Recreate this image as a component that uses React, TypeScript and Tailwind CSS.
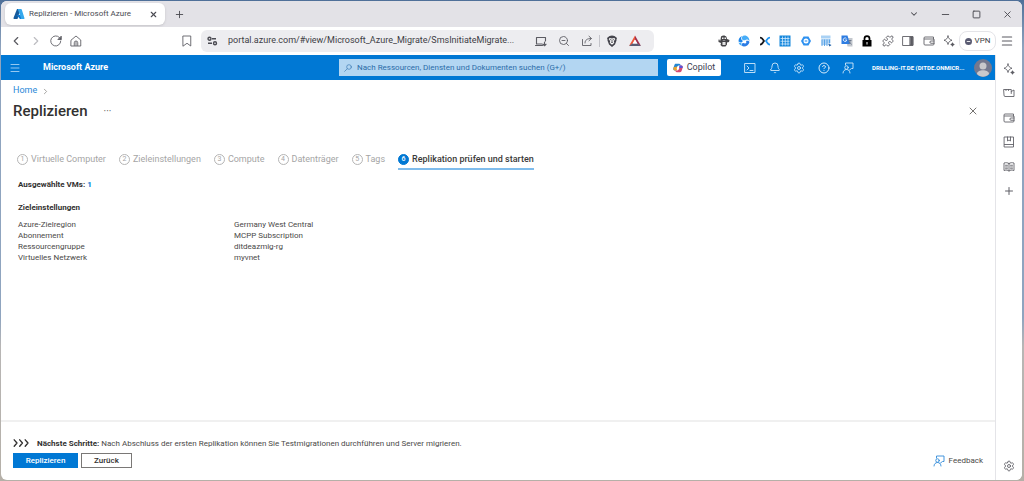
import type { ReactNode } from "react";
import {
  Bell,
  ChevronDown,
  ChevronLeft,
  ChevronRight,
  CircleHelp,
  Menu,
  Minus,
  Plus,
  Puzzle,
  Settings,
  Square,
  X,
  ZoomOut,
} from "lucide-react";

type IconProps = { className?: string };

const Svg = ({ className = "size-3", children }: IconProps & { children: ReactNode }) => (
  <svg
    viewBox="0 0 24 24"
    className={className}
    fill="none"
    stroke="currentColor"
    strokeWidth="1.75"
    strokeLinecap="round"
    strokeLinejoin="round"
    aria-hidden="true"
  >
    {children}
  </svg>
);

const AzureLogo = () => (
  <svg viewBox="0 0 24 24" className="size-3" aria-hidden="true">
    <path d="M8 2h7L9 22H3c-1.400 0-2.400-1-2-2.200Z" fill="#155a9c" />
    <path d="M17 14H7l7 8h6Z" fill="#0f78d0" />
    <path d="M9.500 2h6.500c.8 0 1.300.4 1.500 1.100l5.400 16.700c.4 1.200-.4 2.200-1.600 2.200h-7c1.200 0 2-1.100 1.600-2.200Z" fill="#35a8ed" />
  </svg>
);

const Reload = () => (
  <Svg className="size-3">
    <path d="M21.500 12A10 10 0 1 1 19 5.300L22 8" />
    <path d="M22.500 3v6h-6Z" fill="currentColor" />
  </Svg>
);

const House = () => (
  <Svg className="size-3">
    <path d="M2.500 10 12 2l9.500 8v12h-19Z" />
    <path d="M8.500 21v-5.500a3.500 3.500 0 0 1 7 0V21M12 14v7" />
  </Svg>
);

const BookmarkFlag = () => (
  <Svg className="size-3">
    <path d="M4.500 2h15v20L12 16.500 4.500 22Z" />
  </Svg>
);

const SiteTune = () => (
  <svg viewBox="0 0 24 24" className="size-3" fill="none" stroke="#4b4b52" strokeWidth="2.750" aria-hidden="true">
    <circle cx="7" cy="7.500" r="3" />
    <path d="M12 7.500h8M4 16.500h8" />
    <circle cx="18" cy="16.500" r="3" />
  </svg>
);

const InstallApp = () => (
  <Svg className="size-3">
    <path d="M14 18H3V5h18v7M1 21h14M19 14v7M16 18.500l3 3 3-3" strokeWidth="2.250" />
  </Svg>
);

const Share = () => (
  <Svg className="size-3">
    <path d="M3 9v12h17v-4M8 16c0-6 4-9 12-9M16 2.500 21 7l-5 4.500" />
  </Svg>
);

const BraveLion = () => (
  <svg viewBox="0 0 24 24" className="size-3" aria-hidden="true">
    <path d="m7 2 5-1 5 1 5 4-1 3v2l-3 8-6 5-6-5-3-8V9L2 6Z" fill="#45454d" />
    <path d="m7 6 5 1 5-1 1.500 3-3 3 1 4-4.500 3.500L7.500 16l1-4-3-3Z" fill="#fff" />
    <path d="m7.500 9 3 .8M16.500 9l-3 .8M12 9v5M9.500 16 12 14l2.500 2" stroke="#45454d" strokeWidth="1.600" fill="none" />
  </svg>
);

const BatTriangle = () => (
  <svg viewBox="0 0 24 24" className="size-3" aria-hidden="true">
    <path d="M12 1v8l-5.500 9L0 22Z" fill="#f0583a" />
    <path d="M12 1v8l5.500 9L24 22Z" fill="#a0304f" />
    <path d="M0 22h24l-6.500-5h-11Z" fill="#5a5d75" />
    <path d="m12 9 4.500 8h-9Z" fill="#fff" />
  </svg>
);

const Penguin = () => (
  <svg viewBox="0 0 24 24" className="size-3" aria-hidden="true">
    <path d="M6 3c4-3 9-2 11 1l1 4 5 2-1 4-4 1v4l-3 4H8l-3-3 1-4-5-2V9l4 1Z" fill="#454548" />
    <path d="M8 5h3v3H8ZM13 5h3v3h-3ZM9 14h6v6H9ZM3 11h2v1H3Z" fill="#f2f2f2" />
    <path d="M12 15v5M9.500 11h5" stroke="#b9b9bd" strokeWidth="1.200" />
  </svg>
);

const BlueSwirl = () => (
  <svg viewBox="0 0 24 24" className="size-3" aria-hidden="true">
    <path d="M13 1c6 0 10 5 10 11-2-3-6-4-8-2-3 1-6 1-7-2-1-4 1-7 5-7Z" fill="#47adf8" />
    <path d="M8 2C3 4 1 8 1 13c3 2 7 2 9-1C6 10 5 6 8 2Z" fill="#1f86ea" />
    <path d="M23 14c-1 5-6 9-11 9-4 0-6-3-4-6 2-2 4-1 6 0 3 0 3-3 2-5 3-1 6 0 7 2Z" fill="#2a7de6" />
    <path d="M1 15c3 1 5 0 7-1-2 3-2 6 1 8-4-1-7-3-8-7Z" fill="#47adf8" />
  </svg>
);

const CrossArrows = () => (
  <svg viewBox="0 0 24 24" className="size-3" fill="none" strokeWidth="3.500" aria-hidden="true">
    <path d="M2 5c3 0 4 1 5.500 3.500L10 12l-2.500 3.500C6 18 5 19 2 19" stroke="#17181c" />
    <path d="M22 5c-3 0-4 1-5.500 3.500L14 12l2.500 3.500c1.500 2.500 2.500 3.500 5.500 3.500" stroke="#2196f3" />
  </svg>
);

const BlueGrid = () => (
  <svg viewBox="0 0 24 24" className="size-3" aria-hidden="true">
    <path d="M1 1h22v22H1Z" fill="#1587dc" />
    <path d="M7 3v18M12.500 3v18M18 3v18M3 7h18M3 12.500h18M3 18h18" stroke="#d9eeff" strokeWidth="1.500" />
  </svg>
);

const BlueRing = () => (
  <svg viewBox="0 0 24 24" className="size-3" aria-hidden="true">
    <path d="M7 3h10l5 9-5 9H7l-5-9Z" fill="#2e91f0" />
    <circle cx="12" cy="12" r="5" fill="#fff" />
    <path d="M9.500 10.500h5v3h-5Z" fill="#6aaef3" />
  </svg>
);

const TableCursor = () => (
  <svg viewBox="0 0 24 24" className="size-3" aria-hidden="true">
    <path d="M2 1h19v6H2Z" fill="#a9d1f4" />
    <path d="M3 10h18M3 14h18M3 18h12M4 9v13M9 9v13M14 9v13M19 9v8" stroke="#4b9be5" strokeWidth="1.750" />
    <path d="m16 17 7 3-4 3Z" fill="#1d5fa8" />
  </svg>
);

const Translate = () => (
  <svg viewBox="0 0 24 24" className="size-3" aria-hidden="true">
    <path d="M9 6h14v17H13Z" fill="#c4c8ce" />
    <path d="M1 1h12l5 17H1Z" fill="#2f7de1" />
    <path d="M11 7.500A3.500 3.500 0 1 0 11.500 10H8.500" stroke="#fff" strokeWidth="1.600" fill="none" />
    <path d="M15 11h6M18 10v1.500c0 3-1 5-2.500 6M16 13l5 6" stroke="#5e6b80" strokeWidth="1.500" fill="none" />
  </svg>
);

const PadLock = () => (
  <svg viewBox="0 0 24 24" className="size-3" aria-hidden="true">
    <path d="M7 11V7a5 5 0 0 1 10 0v4" fill="none" stroke="#000" strokeWidth="3.500" />
    <path d="M3 10h18v13H3Z" fill="#000" />
    <path d="M11 14h2v5h-2Z" fill="#fff" />
  </svg>
);

const SidePanel = () => (
  <Svg className="size-3">
    <path d="M2 3h20v18H2Z" />
    <path d="M16.500 4h5v16h-5Z" fill="currentColor" />
  </Svg>
);

const Wallet = () => (
  <Svg className="size-3">
    <path d="M21 8V4H4a2 2 0 0 0-2 2v12a2 2 0 0 0 2 2h16a2 2 0 0 0 2-2V8H3" />
    <path d="M22 12h-6a2 2 0 0 0 0 4.500h6" />
  </Svg>
);

const Sparkle = () => (
  <Svg className="size-3">
    <path d="M10 2c1 5 3 7 8 8.500-5 1.500-7 3.500-8 8.500-1-5-3-7-8-8.500C7 9 9 7 10 2Z" />
    <path d="M19 16.500v5M16.500 19h5" strokeWidth="3" />
  </Svg>
);

const Camera = () => (
  <Svg className="size-3">
    <path d="M2 5h14.500v4L22 6v13H4a2 2 0 0 1-2-2Z" />
    <path d="M16.500 9v4M6 5v2M11 5v2" />
  </Svg>
);

const SavedBook = () => (
  <Svg className="size-3">
    <path d="M3 2h18v20H3ZM3 17h18M9 2v8l3-2 3 2V2" />
  </Svg>
);

const ReadingList = () => (
  <Svg className="size-3">
    <path d="M12 5c-3-2-6-2-10-1v15c4-1 7-1 10 1 3-2 6-2 10-1V4c-4-1-7-1-10 1ZM12 5v15" />
    <path d="M5 8.500h4M5 12h4M5 15.500h4M15 8.500h4M15 12h4M15 15.500h4" />
  </Svg>
);

const CloudShell = () => (
  <Svg className="size-3">
    <path d="M2 3h20v18H2ZM6 8l4 4-4 4M12 17h6" />
  </Svg>
);

const PersonFeedback = () => (
  <Svg className="size-3">
    <path d="M7 6V2h15v11h-3l-4 3" />
    <circle cx="9" cy="11" r="3.500" />
    <path d="M2 22c0-4 3-7 7-7s7 3 7 7" />
  </Svg>
);

const SearchGlass = () => (
  <Svg className="size-2">
    <circle cx="15" cy="9" r="7" />
    <path d="m9.500 14.500-7.500 7.500" />
  </Svg>
);

const CopilotLogo = () => (
  <svg viewBox="0 0 24 24" className="size-[10px]" aria-hidden="true">
    <path d="M7 2h8c2 0 3 2 3.500 4H14c-3 0-4 3-5 6l-2 6H4c-3 0-4-3-3-6l2-6c1-3 2-4 4-4Z" fill="#2186d4" />
    <path d="M1 12c-.5 4 1 6 3 6h5l3-9H7c-3 0-5 0-6 3Z" fill="#e9a22f" />
    <path d="M17 22H9c-2 0-3-2-3.500-4H10c3 0 4-3 5-6l2-6h3c3 0 4 3 3 6l-2 6c-1 3-2 4-4 4Z" fill="#d64b72" />
    <path d="M15 6h5c3 0 4 3 3 6h-8Z" fill="#5b54d6" />
    <path d="M10 9h4l-1.500 6h-4Z" fill="#fff" />
  </svg>
);

type IconButtonProps = { label: string; className?: string; children: ReactNode };

const IconButton = ({ label, className = "", children }: IconButtonProps) => (
  <button type="button" aria-label={label} className={`flex shrink-0 items-center justify-center ${className}`}>
    {children}
  </button>
);

const extensions = [
  { label: "Penguin", icon: <Penguin /> },
  { label: "Sync", icon: <BlueSwirl /> },
  { label: "Links", icon: <CrossArrows /> },
  { label: "Grid", icon: <BlueGrid /> },
  { label: "Ring", icon: <BlueRing /> },
  { label: "Table", icon: <TableCursor /> },
  { label: "Translate", icon: <Translate /> },
  { label: "Lock", icon: <PadLock /> },
  { label: "Extensions", icon: <Puzzle className="size-3" strokeWidth={1.75} /> },
  { label: "Side panel", icon: <SidePanel /> },
  { label: "Wallet", icon: <Wallet /> },
  { label: "Leo", icon: <Sparkle /> },
];

const azureTools = [
  { label: "Cloud Shell", icon: <CloudShell /> },
  { label: "Benachrichtigungen", icon: <Bell className="size-3" strokeWidth={1.75} /> },
  { label: "Einstellungen", icon: <Settings className="size-3" strokeWidth={1.75} /> },
  { label: "Hilfe", icon: <CircleHelp className="size-3" strokeWidth={2} /> },
  { label: "Feedback", icon: <PersonFeedback /> },
];

const sideTools = [
  { label: "Leo", icon: <Sparkle /> },
  { label: "Talk", icon: <Camera /> },
  { label: "Wallet", icon: <Wallet /> },
  { label: "Bookmarks", icon: <SavedBook /> },
  { label: "Reading list", icon: <ReadingList /> },
  { label: "Add", icon: <Plus className="size-3" strokeWidth={2} /> },
];

const steps = ["Virtuelle Computer", "Zieleinstellungen", "Compute", "Datenträger", "Tags", "Replikation prüfen und starten"];
const currentStep = 5;

const settings = [
  { name: "Azure-Zielregion", value: "Germany West Central" },
  { name: "Abonnement", value: "MCPP Subscription" },
  { name: "Ressourcengruppe", value: "ditdeazmig-rg" },
  { name: "Virtuelles Netzwerk", value: "myvnet" },
];

const TabStrip = () => (
  <div className="flex h-[26px] shrink-0 items-center bg-[#e3e2e7] pl-1 text-[#4b4b52]">
    <div className="flex h-[22px] w-40 items-center rounded-md bg-white pr-[6px] pl-2 shadow-sm">
      <AzureLogo />
      <span className="ml-1 grow text-[8px] whitespace-nowrap">Replizieren - Microsoft Azure</span>
      <IconButton label="Tab schließen" className="size-3">
        <X className="size-[9px]" strokeWidth={3} />
      </IconButton>
    </div>
    <IconButton label="Neuer Tab" className="ml-2 size-3">
      <Plus className="size-[11px]" strokeWidth={2} />
    </IconButton>
    <div className="ml-auto flex items-center gap-[19px] pr-[9px]">
      <IconButton label="Tabs suchen" className="size-3">
        <ChevronDown className="size-[10px]" strokeWidth={2.5} />
      </IconButton>
      <IconButton label="Minimieren" className="size-3">
        <Minus className="size-[11px]" strokeWidth={2} />
      </IconButton>
      <IconButton label="Maximieren" className="size-3">
        <Square className="size-[9px]" strokeWidth={2.5} />
      </IconButton>
      <IconButton label="Schließen" className="size-3">
        <X className="size-[11px]" strokeWidth={2} />
      </IconButton>
    </div>
  </div>
);

const AddressBar = () => (
  <div className="flex h-7 shrink-0 items-center bg-white px-2 text-[#5b5b62]">
    <div className="flex items-center gap-[6px]">
      <IconButton label="Zurück">
        <ChevronLeft className="size-[14px]" strokeWidth={2} />
      </IconButton>
      <IconButton label="Vorwärts" className="text-[#bdbdc2]">
        <ChevronRight className="size-[14px]" strokeWidth={2} />
      </IconButton>
      <IconButton label="Neu laden" className="w-[14px]">
        <Reload />
      </IconButton>
      <IconButton label="Startseite" className="w-[14px]">
        <House />
      </IconButton>
    </div>
    <div className="ml-[98px] flex grow items-center gap-2">
      <IconButton label="Lesezeichen">
        <BookmarkFlag />
      </IconButton>
      <div className="flex h-[22px] w-[453px] items-center rounded-md bg-[#ededf0] px-[5px]">
        <SiteTune />
        <input
          aria-label="Adresse"
          defaultValue="portal.azure.com/#view/Microsoft_Azure_Migrate/SmsInitiateMigrate..."
          className="ml-[10px] min-w-0 grow bg-transparent text-[9px] text-[#3d3d45] outline-none"
        />
        <div className="flex items-center gap-[11px]">
          <IconButton label="App installieren">
            <InstallApp />
          </IconButton>
          <IconButton label="Zoom">
            <ZoomOut className="size-3" strokeWidth={1.75} />
          </IconButton>
          <IconButton label="Teilen">
            <Share />
          </IconButton>
        </div>
        <div className="mx-[6px] h-3 w-px bg-[#c4c4ca]" />
        <div className="mr-2 flex items-center gap-[11px]">
          <IconButton label="Brave Shields">
            <BraveLion />
          </IconButton>
          <IconButton label="Brave Rewards">
            <BatTriangle />
          </IconButton>
        </div>
      </div>
    </div>
    <div className="flex w-[237px] items-center justify-between">
      {extensions.map(({ label, icon }) => (
        <IconButton key={label} label={label}>
          {icon}
        </IconButton>
      ))}
    </div>
    <button
      type="button"
      className="ml-1 flex h-5 w-[37px] items-center justify-center gap-[3px] rounded-lg border border-[#e4e4e8] text-[8px] text-[#3d3d45]"
    >
      <svg viewBox="0 0 12 12" className="size-[7px]" aria-hidden="true">
        <circle cx="6" cy="6" r="6" fill="#5a5b72" />
        <path d="M3 6h6" stroke="#fff" strokeWidth="1.500" />
      </svg>
      VPN
    </button>
    <IconButton label="Menü" className="ml-1">
      <Menu className="size-[14px]" strokeWidth={1.75} />
    </IconButton>
  </div>
);

const AzureHeader = () => (
  <header className="flex h-[25px] shrink-0 items-center bg-[#0078d4] text-white">
    <IconButton label="Portalmenü" className="ml-2 text-[#a9d3f5]">
      <Menu className="size-3" strokeWidth={1.75} />
    </IconButton>
    <a href="#" className="ml-[22px] text-[9px] font-bold whitespace-nowrap">
      Microsoft Azure
    </a>
    <div className="flex grow justify-end">
      <label className="flex h-[17px] w-[319px] items-center gap-[5px] bg-[#b3d6f2] px-[5px] text-[#2b6ca8]">
        <SearchGlass />
        <input
          type="text"
          aria-label="Suchen"
          placeholder="Nach Ressourcen, Diensten und Dokumenten suchen (G+/)"
          className="min-w-0 grow bg-transparent text-[8px] outline-none placeholder:text-[#2b6ca8]"
        />
      </label>
      <button
        type="button"
        className="ml-[9px] flex h-[17px] w-[54px] items-center justify-center gap-1 rounded-xs bg-white text-[9px] text-[#3d3d50]"
      >
        <CopilotLogo />
        Copilot
      </button>
    </div>
    <div className="ml-[23px] flex w-[110px] items-center justify-between text-[#d5eafa]">
      {azureTools.map(({ label, icon }) => (
        <IconButton key={label} label={label}>
          {icon}
        </IconButton>
      ))}
    </div>
    <button type="button" className="ml-[18px] flex items-center gap-1 pr-[3px] text-[6px] font-bold whitespace-nowrap">
      <span className="w-[98px] text-left">DRILLING-IT.DE (DITDE.ONMICR...</span>
      <svg viewBox="0 0 18 18" className="size-[18px]" aria-hidden="true">
        <circle cx="9" cy="9" r="9" fill="#74788e" />
        <circle cx="9" cy="7" r="3.500" fill="#c9c8cc" />
        <path d="M3 15c0-5 12-5 12 0-3 3.500-9 3.500-12 0Z" fill="#c9c8cc" />
      </svg>
    </button>
  </header>
);

const StepTabs = () => (
  <nav className="mt-8 ml-1 flex gap-[13px] text-[9px]">
    {steps.map((step, index) => {
      const active = index === currentStep;
      return (
        <a
          key={step}
          href="#"
          aria-current={active ? "step" : undefined}
          className={`flex h-[18px] items-center gap-[3px] border-b-2 pb-px whitespace-nowrap ${
            active ? "border-[#7fbcec] font-medium text-[#3b3a39]" : "border-transparent text-[#a5a5a5]"
          }`}
        >
          <span
            className={`flex size-[11px] items-center justify-center rounded-full border text-[7px] leading-none ${
              active ? "border-[#0078d4] bg-[#0078d4] text-white" : "border-[#b5b5b5]"
            }`}
          >
            {index + 1}
          </span>
          {step}
        </a>
      );
    })}
  </nav>
);

const MigrationBlade = () => (
  <main className="flex grow flex-col">
    <div className="grow pr-4 pl-3">
      <nav className="flex h-[22px] items-center gap-1 text-[9px]">
        <a href="#" className="text-[#2b88d8]">
          Home
        </a>
        <ChevronRight className="size-[9px] text-[#8a8886]" strokeWidth={2} />
      </nav>
      <div className="flex h-[18px] items-center">
        <h1 className="text-[15px] font-medium text-[#323130]">Replizieren</h1>
        <button type="button" aria-label="Mehr" className="ml-4 text-[10px] text-[#605e5c]">
          ···
        </button>
        <IconButton label="Blade schließen" className="ml-auto text-[#605e5c]">
          <X className="size-3" strokeWidth={1.75} />
        </IconButton>
      </div>
      <StepTabs />
      <section className="ml-[5px] text-[8px] leading-[11px] text-[#4a4948]">
        <p className="mt-[9px] font-bold text-[#323130]">
          Ausgewählte VMs:{" "}
          <a href="#" className="text-[#0078d4]">
            1
          </a>
        </p>
        <h2 className="mt-3 mb-[6px] font-bold text-[#323130]">Zieleinstellungen</h2>
        <table>
          <tbody>
            {settings.map(({ name, value }) => (
              <tr key={name}>
                <th scope="row" className="w-[216px] p-0 text-left font-normal">
                  {name}
                </th>
                <td className="p-0">{value}</td>
              </tr>
            ))}
          </tbody>
        </table>
      </section>
    </div>
    <footer className="border-t-2 border-[#f0f0f0] pt-4 pr-3 pb-3 pl-3">
      <div className="flex items-center text-[8px] leading-[11px] text-[#4a4948]">
        <Svg className="h-[11px] w-[18px] overflow-visible text-[#323130]">
          <path d="m-5 4 6 7-6 7M7 4l6 7-6 7M19 4l6 7-6 7" strokeWidth="3" />
        </Svg>
        <p className="ml-[6px]">
          <strong className="text-[#323130]">Nächste Schritte:</strong> Nach Abschluss der ersten Replikation können Sie
          Testmigrationen durchführen und Server migrieren.
        </p>
      </div>
      <div className="mt-1 flex items-center gap-[3px] text-[8px] font-medium">
        <button type="button" className="h-[15px] w-[65px] bg-[#0078d4] leading-none text-white">
          Replizieren
        </button>
        <button type="button" className="h-[15px] w-[51px] border border-[#7a7876] leading-none text-[#323130]">
          Zurück
        </button>
        <a href="#" className="ml-auto flex items-center gap-1 font-normal text-[#4a4948]">
          <span className="text-[#2b88d8]">
            <PersonFeedback />
          </span>
          Feedback
        </a>
      </div>
    </footer>
  </main>
);

const BraveSidebar = () => (
  <aside className="flex w-[27px] shrink-0 flex-col items-center justify-between border-l border-[#e4e4e8] bg-white py-2 text-[#5f5f66]">
    <div className="flex h-[134px] flex-col justify-between">
      {sideTools.map(({ label, icon }) => (
        <IconButton key={label} label={label}>
          {icon}
        </IconButton>
      ))}
    </div>
    <IconButton label="Einstellungen">
      <Settings className="size-3" strokeWidth={1.75} />
    </IconButton>
  </aside>
);

export default function App() {
  return (
    <div className="flex min-h-screen bg-[linear-gradient(#4f7099,#8fa4bf_10%,#8fa4bf_66%,#b8b6b5_72%,#b5b0a8)] pt-px pr-[2px] pb-px pl-px font-[Roboto,'Open_Sans',sans-serif]">
      <div className="flex grow flex-col overflow-hidden rounded-md bg-white">
        <TabStrip />
        <AddressBar />
        <div className="flex grow">
          <div className="flex grow flex-col">
            <AzureHeader />
            <MigrationBlade />
          </div>
          <BraveSidebar />
        </div>
      </div>
    </div>
  );
}
